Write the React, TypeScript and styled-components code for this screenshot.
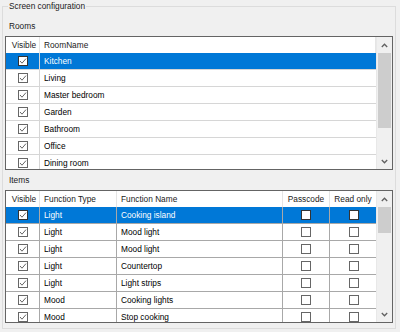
import React from 'react'
import styled, { createGlobalStyle } from 'styled-components'

const GlobalStyle = createGlobalStyle`
  html, body {
    margin: 0;
    padding: 0;
    background: #f0f0f0;
  }
  body {
    font-family: 'Liberation Sans', Arial, sans-serif;
    font-size: 8.3px;
    color: #000;
  }
`

const Page = styled.div`
  width: 400px;
  height: 332px;
  background: #f0f0f0;
  overflow: hidden;
`

const Frame = styled.div`
  position: relative;
  box-sizing: border-box;
  margin: 6px 0 0 2px;
  width: 394px;
  height: 323px;
  border: 1px solid #dcdcdc;
  padding: 0 2px;
`

const Legend = styled.span`
  position: absolute;
  top: -6px;
  left: 5px;
  padding: 0 1px;
  line-height: 11px;
  background: #f0f0f0;
  color: #1a1a1a;
`

const SectionLabel = styled.div<{ $top: number }>`
  padding: ${(p) => p.$top}px 0 4px 4px;
  line-height: 11px;
  color: #1a1a1a;
`

const Grid = styled.div<{ $height: number }>`
  display: flex;
  box-sizing: border-box;
  height: ${(p) => p.$height}px;
  border: 1px solid #646464;
  background: #fff;
`

const Table = styled.div<{ $cols: string }>`
  flex: 1;
  display: grid;
  grid-template-columns: ${(p) => p.$cols};
  grid-auto-rows: 17px;
  grid-template-rows: 16px;
  overflow: hidden;
  align-content: start;
`

const HeadCell = styled.div<{ $center?: boolean; $pad?: number }>`
  display: flex;
  align-items: center;
  justify-content: ${(p) => (p.$center ? 'center' : 'flex-start')};
  padding-left: ${(p) => p.$pad ?? 4}px;
  border-right: 1px solid #e5e5e5;
  white-space: nowrap;
  overflow: hidden;
  color: #1a1a1a;
  &:last-of-type {
    border-right: none;
  }
`

const Cell = styled.div<{ $sel?: boolean; $line: string; $center?: boolean; $last?: boolean }>`
  display: flex;
  align-items: center;
  justify-content: ${(p) => (p.$center ? 'center' : 'flex-start')};
  box-sizing: border-box;
  padding-left: ${(p) => (p.$center ? 0 : 4)}px;
  background: ${(p) => (p.$sel ? '#0078d7' : '#fff')};
  color: ${(p) => (p.$sel ? '#fff' : '#000')};
  border-bottom: 1px solid ${(p) => p.$line};
  border-right: ${(p) => (p.$last ? 'none' : `1px solid ${p.$line}`)};
  white-space: nowrap;
  overflow: hidden;
`

const Box = styled.span<{ $sel?: boolean }>`
  display: block;
  box-sizing: border-box;
  width: 10px;
  height: 10px;
  border: 1px solid ${(p) => (p.$sel ? '#333' : '#666')};
  background: #fff;
`

const Scrollbar = styled.div`
  width: 15px;
  display: flex;
  flex-direction: column;
  background: #f0f0f0;
  border-left: 1px solid #e8e8e8;
`

const Arrow = styled.div`
  height: 16px;
  display: flex;
  align-items: center;
  justify-content: center;
`

const Track = styled.div`
  flex: 1;
  display: flex;
  flex-direction: column;
`

const Thumb = styled.div<{ $h: number }>`
  height: ${(p) => p.$h}px;
  margin: 0 1px;
  background: #cdcdcd;
`

const CheckBox = ({ checked, sel }: { checked?: boolean; sel?: boolean }) => (
  <Box $sel={sel}>
    {checked && (
      <svg width="8" height="8" viewBox="0 0 8 8" style={{ display: 'block' }}>
        <path d="M1 4 L3 6.2 L7 1.6" fill="none" stroke="#555" strokeWidth="0.9" />
      </svg>
    )}
  </Box>
)

const Chevron = ({ down }: { down?: boolean }) => (
  <svg width="7" height="5" viewBox="0 0 7 5">
    <path
      d={down ? 'M0.8 1 L3.5 3.8 L6.2 1' : 'M0.8 4 L3.5 1.2 L6.2 4'}
      fill="none"
      stroke="#606060"
      strokeWidth="1.3"
    />
  </svg>
)

const ScrollBar = ({ thumb }: { thumb: number }) => (
  <Scrollbar>
    <Arrow>
      <Chevron />
    </Arrow>
    <Track>
      <Thumb $h={thumb} />
    </Track>
    <Arrow>
      <Chevron down />
    </Arrow>
  </Scrollbar>
)

const rooms = ['Kitchen', 'Living', 'Master bedroom', 'Garden', 'Bathroom', 'Office', 'Dining room']

const items = [
  ['Light', 'Cooking island'],
  ['Light', 'Mood light'],
  ['Light', 'Mood light'],
  ['Light', 'Countertop'],
  ['Light', 'Light strips'],
  ['Mood', 'Cooking lights'],
  ['Mood', 'Stop cooking'],
]

const App: React.FC = () => {
  const roomLine = '#d6d6d6'
  const itemLine = '#a8a8a8'
  return (
    <Page>
      <GlobalStyle />
      <Frame>
        <Legend>Screen configuration</Legend>
        <SectionLabel $top={14}>Rooms</SectionLabel>
        <Grid $height={134}>
          <Table $cols="34px 1fr">
            <HeadCell $center $pad={3}>Visible</HeadCell>
            <HeadCell>RoomName</HeadCell>
            {rooms.map((r, i) => (
              <React.Fragment key={r}>
                <Cell $sel={i === 0} $line={roomLine} $center>
                  <CheckBox checked sel={i === 0} />
                </Cell>
                <Cell $sel={i === 0} $line={roomLine} $last>
                  {r}
                </Cell>
              </React.Fragment>
            ))}
          </Table>
          <ScrollBar thumb={75} />
        </Grid>
        <SectionLabel $top={5}>Items</SectionLabel>
        <Grid $height={133}>
          <Table $cols="34px 77px 166px 47px 47px">
            <HeadCell $center $pad={3}>Visible</HeadCell>
            <HeadCell>Function Type</HeadCell>
            <HeadCell>Function Name</HeadCell>
            <HeadCell $center $pad={0}>Passcode</HeadCell>
            <HeadCell $center $pad={0}>Read only</HeadCell>
            {items.map(([type, name], i) => (
              <React.Fragment key={i}>
                <Cell $sel={i === 0} $line={itemLine} $center>
                  <CheckBox checked sel={i === 0} />
                </Cell>
                <Cell $sel={i === 0} $line={itemLine}>
                  {type}
                </Cell>
                <Cell $sel={i === 0} $line={itemLine}>
                  {name}
                </Cell>
                <Cell $sel={i === 0} $line={itemLine} $center>
                  <CheckBox sel={i === 0} />
                </Cell>
                <Cell $sel={i === 0} $line={itemLine} $center $last>
                  <CheckBox sel={i === 0} />
                </Cell>
              </React.Fragment>
            ))}
          </Table>
          <ScrollBar thumb={26} />
        </Grid>
      </Frame>
    </Page>
  )
}

export default App
